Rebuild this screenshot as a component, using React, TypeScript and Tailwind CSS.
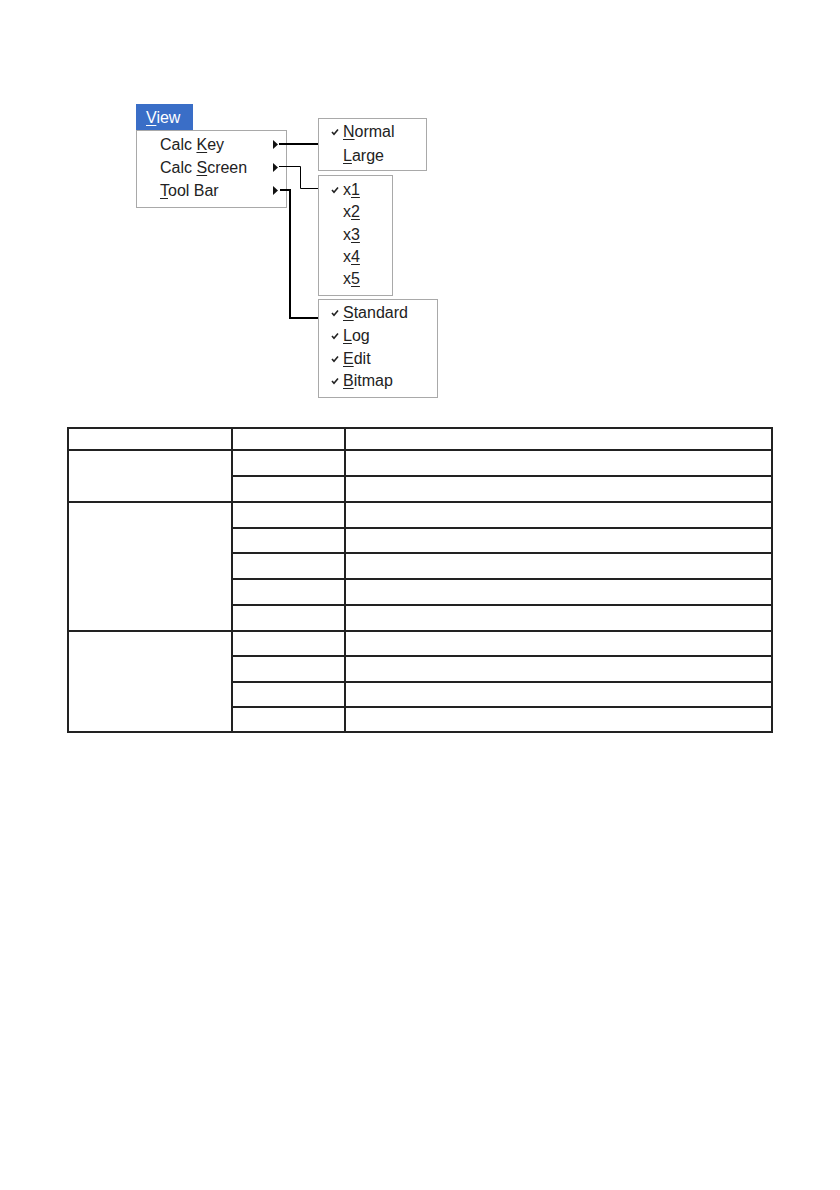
import React from 'react';

const font = { fontFamily: '"Liberation Sans", Arial, sans-serif' };

function U({ children }: { children: React.ReactNode }) {
  return <span className="underline underline-offset-2 decoration-1">{children}</span>;
}

function Check() {
  return (
    <svg width="8" height="8" viewBox="0 0 8 8" className="shrink-0">
      <path d="M1 4 L3 6.3 L7 1.5" fill="none" stroke="#222" strokeWidth="1.6" />
    </svg>
  );
}

function Arrow() {
  return (
    <svg width="5" height="9" viewBox="0 0 5 9">
      <path d="M0 0 L5 4.5 L0 9 Z" fill="#111" />
    </svg>
  );
}

type SubItem = { checked: boolean; label: React.ReactNode };

function SubMenu({ items, className, rowH }: { items: SubItem[]; className: string; rowH: string }) {
  return (
    <div className={`absolute bg-white border border-[#a9a9a9] pt-[1px] ${className}`}>
      {items.map((it, i) => (
        <div key={i} className={`flex items-center ${rowH}`}>
          <div className="w-[24px] flex justify-end pr-[4px]">{it.checked && <Check />}</div>
          <span className="text-[16px] text-[#222] leading-none">{it.label}</span>
        </div>
      ))}
    </div>
  );
}

const rows = [
  ['h-[26px]', 'h-[26px]'],
  ['h-[26px]', 'h-[25px]', 'h-[26px]', 'h-[26px]', 'h-[26px]'],
  ['h-[25px]', 'h-[26px]', 'h-[25px]', 'h-[25px]'],
];

export default function App() {
  return (
    <div className="w-[840px] min-h-[1190px] bg-white" style={font}>
      {/* menu diagram */}
      <div className="relative h-[427px]">
        <div className="absolute left-[136px] top-[104px] w-[57px] h-[27px] bg-[#3a6ec7] flex items-center pl-[10px]">
          <span className="text-white text-[16px] leading-none"><U>V</U>iew</span>
        </div>
        <div className="absolute left-[136px] top-[130px] w-[151px] h-[78px] bg-white border border-[#a9a9a9] pt-[2px]">
          {[
            <>Calc <U>K</U>ey</>,
            <>Calc <U>S</U>creen</>,
            <><U>T</U>ool Bar</>,
          ].map((label, i) => (
            <div key={i} className="flex items-center justify-between h-[23px] pl-[23px] pr-[8px]">
              <span className="text-[16px] text-[#222] leading-none">{label}</span>
              <Arrow />
            </div>
          ))}
        </div>

        <SubMenu
          className="left-[318px] top-[118px] w-[109px] h-[53px]"
          rowH="h-[24px]"
          items={[
            { checked: true, label: <><U>N</U>ormal</> },
            { checked: false, label: <><U>L</U>arge</> },
          ]}
        />
        <SubMenu
          className="left-[318px] top-[175px] w-[75px] h-[121px] pt-[3px]"
          rowH="h-[22.3px]"
          items={[1, 2, 3, 4, 5].map((n) => ({ checked: n === 1, label: <>x<U>{n}</U></> }))}
        />
        <SubMenu
          className="left-[318px] top-[299px] w-[120px] h-[99px] pt-[2px]"
          rowH="h-[22.7px]"
          items={[
            { checked: true, label: <><U>S</U>tandard</> },
            { checked: true, label: <><U>L</U>og</> },
            { checked: true, label: <><U>E</U>dit</> },
            { checked: true, label: <><U>B</U>itmap</> },
          ]}
        />

        <svg className="absolute left-0 top-0" width="840" height="427">
          <path d="M279 144 H318" stroke="#000" strokeWidth="2" fill="none" />
          <path d="M279 166.5 H300.5 V188.5 H318" stroke="#000" strokeWidth="1" fill="none" />
          <path d="M280 190 H290 V318 H318" stroke="#000" strokeWidth="2" fill="none" />
        </svg>
      </div>

      {/* empty table */}
      <table className="ml-[67px] w-[706px] border-collapse border-2 border-[#222] table-fixed">
        <colgroup>
          <col className="w-[164px]" />
          <col className="w-[113px]" />
          <col />
        </colgroup>
        <tbody>
          <tr className="h-[22px]">
            <td className="border-2 border-[#222]" />
            <td className="border-2 border-[#222]" />
            <td className="border-2 border-[#222]" />
          </tr>
          {rows.map((group, g) =>
            group.map((h, i) => (
              <tr key={`${g}-${i}`} className={h}>
                {i === 0 && <td rowSpan={group.length} className="border-2 border-[#222]" />}
                <td className="border-2 border-[#222]" />
                <td className="border-2 border-[#222]" />
              </tr>
            ))
          )}
        </tbody>
      </table>
    </div>
  );
}
